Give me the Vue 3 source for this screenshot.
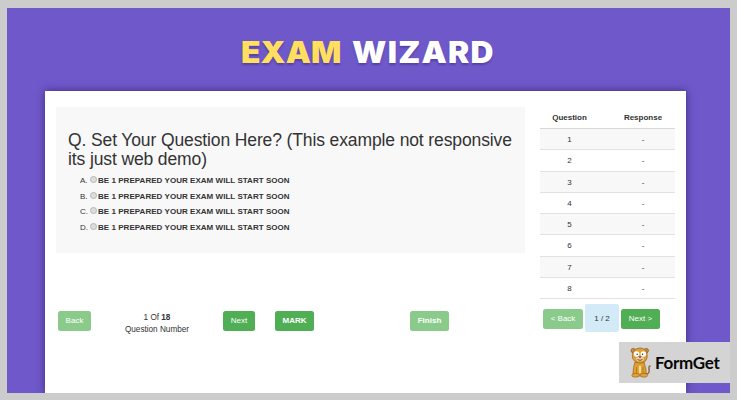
<script setup>
import { ref } from 'vue'

const options = ref(['A', 'B', 'C', 'D'])
const label = 'BE 1 PREPARED YOUR EXAM WILL START SOON'
const questions = ref([1, 2, 3, 4, 5, 6, 7, 8])
const total = 18
</script>

<template>
<div class="page">
  <div class="banner">
    <h1><span class="first">EXAM</span><span class="second">WIZARD</span></h1>
    <div class="window">
      <div class="left">
        <div class="question">
          <h2>Q. Set Your Question Here? (This example not responsive<br>its just web demo)</h2>
          <div v-for="item in options" :key="item" class="option">
            <span class="letter">{{ item }}.</span>
            <i class="radio"></i>
            <b>{{ label }}</b>
          </div>
        </div>
        <div class="controls">
          <button class="btn back disabled">Back</button>
          <div class="count">
            <p>1 Of <b>{{ total }}</b></p>
            <p>Question Number</p>
          </div>
          <button class="btn next">Next</button>
          <button class="btn mark bold">MARK</button>
          <button class="btn finish bold disabled">Finish</button>
        </div>
      </div>
      <div class="right">
        <div class="row head"><span>Question</span><span>Response</span></div>
        <div v-for="n in questions" :key="n" class="row" :class="{ odd: n % 2 }">
          <span>{{ n }}</span><span>-</span>
        </div>
        <div class="pager">
          <button class="btn prev disabled">&lt; Back</button>
          <span class="current">1 / 2</span>
          <button class="btn forward">Next &gt;</button>
        </div>
      </div>
    </div>
  </div>
  <div class="brand">
    <svg class="mascot" viewBox="0 0 22 31">
      <path d="M16 27 Q20 27 19 22 Q18.500 19 20.500 19" fill="none" stroke="#8b5a2b" stroke-width="1.300" />
      <circle cx="3.200" cy="3.600" r="2.200" fill="#d18b24" stroke="#74481f" stroke-width=".6" />
      <circle cx="16.300" cy="3.600" r="2.200" fill="#d18b24" stroke="#74481f" stroke-width=".6" />
      <path d="M5 15 Q3 20 3 27 Q3 29 7 29 L14 29 Q17 28 16 23 L14 15Z" fill="#dfa02f" stroke="#925e22" stroke-width=".7" />
      <path d="M3 5 Q5 1 10 1 Q15 1 17 6 Q18 11 15.500 14 Q10 18 4.500 14 Q1 11 3 5Z" fill="#dfa03a" stroke="#925e22" stroke-width=".7" />
      <circle cx="6.600" cy="7" r="2.800" fill="#fff" />
      <circle cx="13.300" cy="7" r="2.800" fill="#fff" />
      <circle cx="7.200" cy="7.300" r=".7" fill="#332015" />
      <circle cx="12.600" cy="7.300" r=".7" fill="#332015" />
      <ellipse cx="10" cy="12" rx="3.800" ry="2.300" fill="#ecd0a0" />
      <path d="M8.500 9.400 H11.500 L10 11.200Z" fill="#4b2a18" />
      <path d="M7.500 12.600 Q10 14 12.500 12.600" fill="none" stroke="#6d3b1f" stroke-width=".9" />
      <path d="M9 19 Q10 18 11 19 V26 H9Z" fill="#f6dc9c" />
      <path d="M6.500 20 V27 M13 20 V27" stroke="#a86c23" stroke-width=".7" />
      <ellipse cx="5.500" cy="28.300" rx="3.700" ry="1.900" fill="#e2a23a" stroke="#925e22" stroke-width=".6" />
      <ellipse cx="14" cy="28.300" rx="3.700" ry="1.900" fill="#e2a23a" stroke="#925e22" stroke-width=".6" />
    </svg>
    <span class="brand_name">FormGet</span>
  </div>
</div>
</template>

<style>
body{
    margin: 0;
}
</style>

<style scoped>
*{
    box-sizing: border-box;
}
.page{
    position: relative;
    width: 737px;
    height: 400px;
    padding: 8px 7px 7px;
    background: #ccc;
    font-family: "Liberation Sans", Arial, sans-serif;
    color: #333;
}
.banner{
    height: 385px;
    overflow: hidden;
    background: #6f58ca;
}
h1{
    display: flex;
    height: 83px;
    margin: 0;
    padding: 26px 0 0 234px;
    font: 900 30px/36px Inter, sans-serif;
    text-shadow: 0 2px 2px rgba(50, 30, 110, .4);
    white-space: nowrap;
}
/* stretched a little, the heading face is wider than Inter */
.first, .second{
    transform: scaleX(1.06);
    transform-origin: left;
}
.first{
    width: 111px;
    color: #ffdf5d;
    letter-spacing: .1px;
}
.second{
    color: #fff;
    letter-spacing: 1.200px;
}
.window{
    display: flex;
    justify-content: space-between;
    width: 641px;
    height: 302px;
    margin-left: 38px;
    padding: 16px 11px 0;
    background: #fff;
    box-shadow: 0 0 8px rgba(35, 20, 80, .65);
}
.left{
    width: 469px;
}
.question{
    height: 146px;
    padding: 24px 0 0 12px;
    background: #f8f8f8;
}
h2{
    margin: 0 0 4px;
    font-size: 17.500px;
    font-weight: normal;
    line-height: 19px;
    letter-spacing: -.120px;
    white-space: nowrap;
}
.option{
    display: flex;
    height: 15.500px;
    padding-left: 12px;
    font-size: 8px;
    line-height: 15px;
    white-space: nowrap;
}
.option b{
    letter-spacing: .04px;
}
.letter{
    width: 10px;
}
.radio{
    width: 7px;
    height: 7px;
    margin: 3px 1px 0 0;
    border: 1px solid #b5b5b5;
    border-radius: 50%;
    background: #ddd;
}
.controls{
    display: flex;
    align-items: flex-start;
    padding: 58px 0 0 2px;
}
.btn{
    height: 20px;
    padding: 0;
    border: 0;
    border-radius: 2.500px;
    background: #50ae54;
    color: #fff;
    font: 8px/20px "Liberation Sans", Arial, sans-serif;
    text-align: center;
    white-space: nowrap;
}
.btn.bold{
    font-weight: bold;
}
.btn.disabled{
    background: #8acb8b;
}
.back{
    width: 33px;
}
.count{
    width: 132px;
    padding-top: 1px;
    text-align: center;
    font-size: 8.200px;
    line-height: 12px;
}
.count p{
    margin: 0;
}
.next{
    width: 32px;
}
.mark{
    width: 39px;
    margin-left: 20px;
}
.finish{
    width: 39px;
    margin-left: 96px;
}
.right{
    width: 135px;
}
.row{
    display: flex;
    height: 21.300px;
    border-bottom: 1px solid #e2e2e2;
    font-size: 8px;
    line-height: 21px;
    text-align: center;
}
.row span:first-child{
    width: 59px;
}
.row span:last-child{
    width: 76px;
    padding-left: 12px;
}
.head{
    height: 22px;
    border-bottom-color: #d8d8d8;
    font-weight: bold;
}
.odd{
    background: #f8f8f8;
}
.pager{
    display: flex;
    align-items: center;
    gap: 2px;
    padding: 5px 0 0 3px;
}
.pager .btn{
    margin-top: 2px;
}
.prev{
    width: 40px;
}
.current{
    width: 34px;
    height: 28px;
    border-radius: 2px;
    background: #d3eaf7;
    font-size: 8px;
    line-height: 29px;
    text-align: center;
}
.forward{
    width: 39px;
}
.brand{
    position: absolute;
    left: 619px;
    top: 342px;
    display: flex;
    align-items: center;
    width: 111px;
    height: 41px;
    padding-left: 11px;
    background: #d4d4d4;
}
.mascot{
    width: 22px;
    height: 31px;
}
.brand_name{
    margin-left: 3px;
    color: #080808;
    font: bold 17px/24px Lato, sans-serif;
    letter-spacing: -.300px;
}
</style>
